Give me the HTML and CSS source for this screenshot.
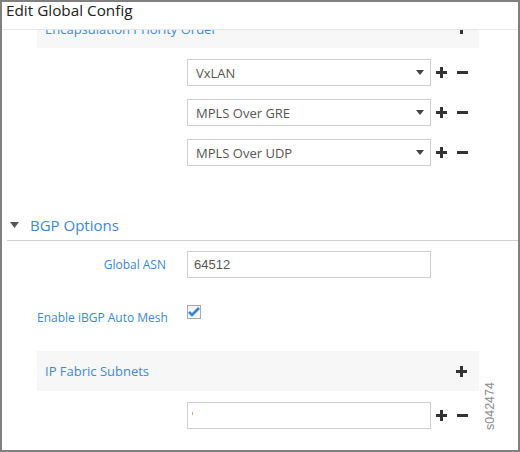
FILE: index.html
```html
<!DOCTYPE html>
<html>
<head>
<meta charset="utf-8">
<link rel="stylesheet" href="styles.css">
</head>
<body>
<div class="frame">
  <div class="title">Edit Global Config</div>
  <div class="content">
    <div class="sec-head scrolled">
      <span class="sec-title">Encapsulation Priority Order</span>
      <svg class="ic" width="11" height="11" viewBox="0 0 11 11"><path d="M4 0h3v4h4v3H7v4H4V7H0V4h4z" fill="#333"/></svg>
    </div>
    <div class="list">
      <div class="row">
        <div class="select"><span>VxLAN</span><i class="caret"></i></div>
        <div class="acts">
          <svg width="11" height="11" viewBox="0 0 11 11"><path d="M4 0h3v4h4v3H7v4H4V7H0V4h4z" fill="#333"/></svg>
          <svg width="11" height="11" viewBox="0 0 11 11"><path d="M0 4h11v3H0z" fill="#333"/></svg>
        </div>
      </div>
      <div class="row">
        <div class="select"><span>MPLS Over GRE</span><i class="caret"></i></div>
        <div class="acts">
          <svg width="11" height="11" viewBox="0 0 11 11"><path d="M4 0h3v4h4v3H7v4H4V7H0V4h4z" fill="#333"/></svg>
          <svg width="11" height="11" viewBox="0 0 11 11"><path d="M0 4h11v3H0z" fill="#333"/></svg>
        </div>
      </div>
      <div class="row">
        <div class="select"><span>MPLS Over UDP</span><i class="caret"></i></div>
        <div class="acts">
          <svg width="11" height="11" viewBox="0 0 11 11"><path d="M4 0h3v4h4v3H7v4H4V7H0V4h4z" fill="#333"/></svg>
          <svg width="11" height="11" viewBox="0 0 11 11"><path d="M0 4h11v3H0z" fill="#333"/></svg>
        </div>
      </div>
    </div>

    <div class="bgp">
      <svg class="tri" width="9" height="6" viewBox="0 0 9 6"><path d="M0 0h9L4.5 6z" fill="#555"/></svg>
      <span>BGP Options</span>
    </div>

    <div class="field asn">
      <label class="lbl">Global ASN</label>
      <div class="input"><span class="val">64512</span></div>
    </div>
    <div class="field mesh">
      <label class="lbl">Enable iBGP Auto Mesh</label>
      <div class="check"><svg width="12" height="10" viewBox="0 0 12 10"><path d="M1 5l3 3 7-7" fill="none" stroke="#3a83c8" stroke-width="2.6"/></svg></div>
    </div>

    <div class="sec-head ipf">
      <span class="sec-title">IP Fabric Subnets</span>
      <svg class="ic" width="11" height="11" viewBox="0 0 11 11"><path d="M4 0h3v4h4v3H7v4H4V7H0V4h4z" fill="#333"/></svg>
    </div>
    <div class="list">
      <div class="row">
        <div class="input empty"><i class="cursor"></i></div>
        <div class="acts">
          <svg width="11" height="11" viewBox="0 0 11 11"><path d="M4 0h3v4h4v3H7v4H4V7H0V4h4z" fill="#333"/></svg>
          <svg width="11" height="11" viewBox="0 0 11 11"><path d="M0 4h11v3H0z" fill="#333"/></svg>
        </div>
      </div>
    </div>
    <div class="fig">s042474</div>
  </div>
</div>
</body>
</html>
```
FILE: styles.css
```css
html, body { margin: 0; padding: 0; background: #fff; }
.frame {
  width: 520px; height: 452px; box-sizing: border-box;
  border: 2px solid #808080;
  overflow: hidden; position: relative;
  font-family: "Open Sans", "Noto Sans", sans-serif;
}
.title {
  height: 30px; box-sizing: border-box;
  border-bottom: 1px solid #e6e6e6;
  font-size: 15.3px; color: #222;
  padding-left: 4px; line-height: 20px;
  margin-top: -2px;
}
.content { position: relative; height: 419px; overflow: hidden; }
.sec-head {
  margin-left: 35px; width: 442px; height: 40px; box-sizing: border-box;
  background: #f7f7f7;
  display: flex; align-items: center; justify-content: space-between;
  padding: 0 12px 0 8px;
}
.sec-head.scrolled { margin-top: -21px; height: 39px; }
.sec-title { color: #3c8ad0; font-size: 13px; }
.list { display: flex; flex-direction: column; gap: 13px; margin-top: 11px; }
.row { display: flex; align-items: center; margin-left: 185px; }
.select, .input {
  width: 244px; height: 27px; box-sizing: border-box;
  border: 1px solid #cfcfcf; background: #fff;
  display: flex; align-items: center; justify-content: space-between;
  padding: 0 6px 0 8px;
  font-size: 13px; color: #555;
}
.caret {
  width: 0; height: 0;
  border-left: 4px solid transparent; border-right: 4px solid transparent;
  border-top: 5px solid #444;
}
.acts { display: flex; gap: 10px; margin-left: 5px; }
.acts svg { display: block; }
.bgp {
  margin-top: 46px; margin-left: 5px; height: 29px;
  border-bottom: 1px solid #d0d0d0;
  display: flex; align-items: center; gap: 11px;
  padding-left: 3px; padding-bottom: 2px; box-sizing: border-box;
  color: #3c8ad0; font-size: 15px;
}
.tri { display: block; }
.field { display: flex; align-items: center; }
.lbl { width: 129px; margin-left: 35px; margin-right: 21px; text-align: right; font-size: 12px; color: #3c8ad0; white-space: nowrap; }
.asn { margin-top: 10px; }
.asn .val { font-family: "Liberation Sans", Arial, sans-serif; font-size: 13px; color: #555; margin-left: -2px; }
.mesh { margin-top: 27px; align-items: flex-start; }
.mesh .lbl { margin-top: 4px; }
.check {
  width: 14px; height: 14px; box-sizing: border-box;
  border: 1px solid #a9a9a9; background: #f4f6f9;
  display: flex; align-items: center; justify-content: center;
}
.check svg { display: block; }
.ipf { margin-top: 25px; }
.cursor { display: block; width: 1px; height: 3px; background: #d9a070; margin-top: -4px; margin-left: -4px; }
.input.empty { justify-content: flex-start; }
.fig {
  position: absolute; left: 481px; top: 400px;
  transform: rotate(-90deg); transform-origin: left top;
  font-family: "Liberation Sans", Arial, sans-serif; font-size: 12.5px; line-height: 14px; color: #8a8a8a;
  white-space: nowrap;
}
```
